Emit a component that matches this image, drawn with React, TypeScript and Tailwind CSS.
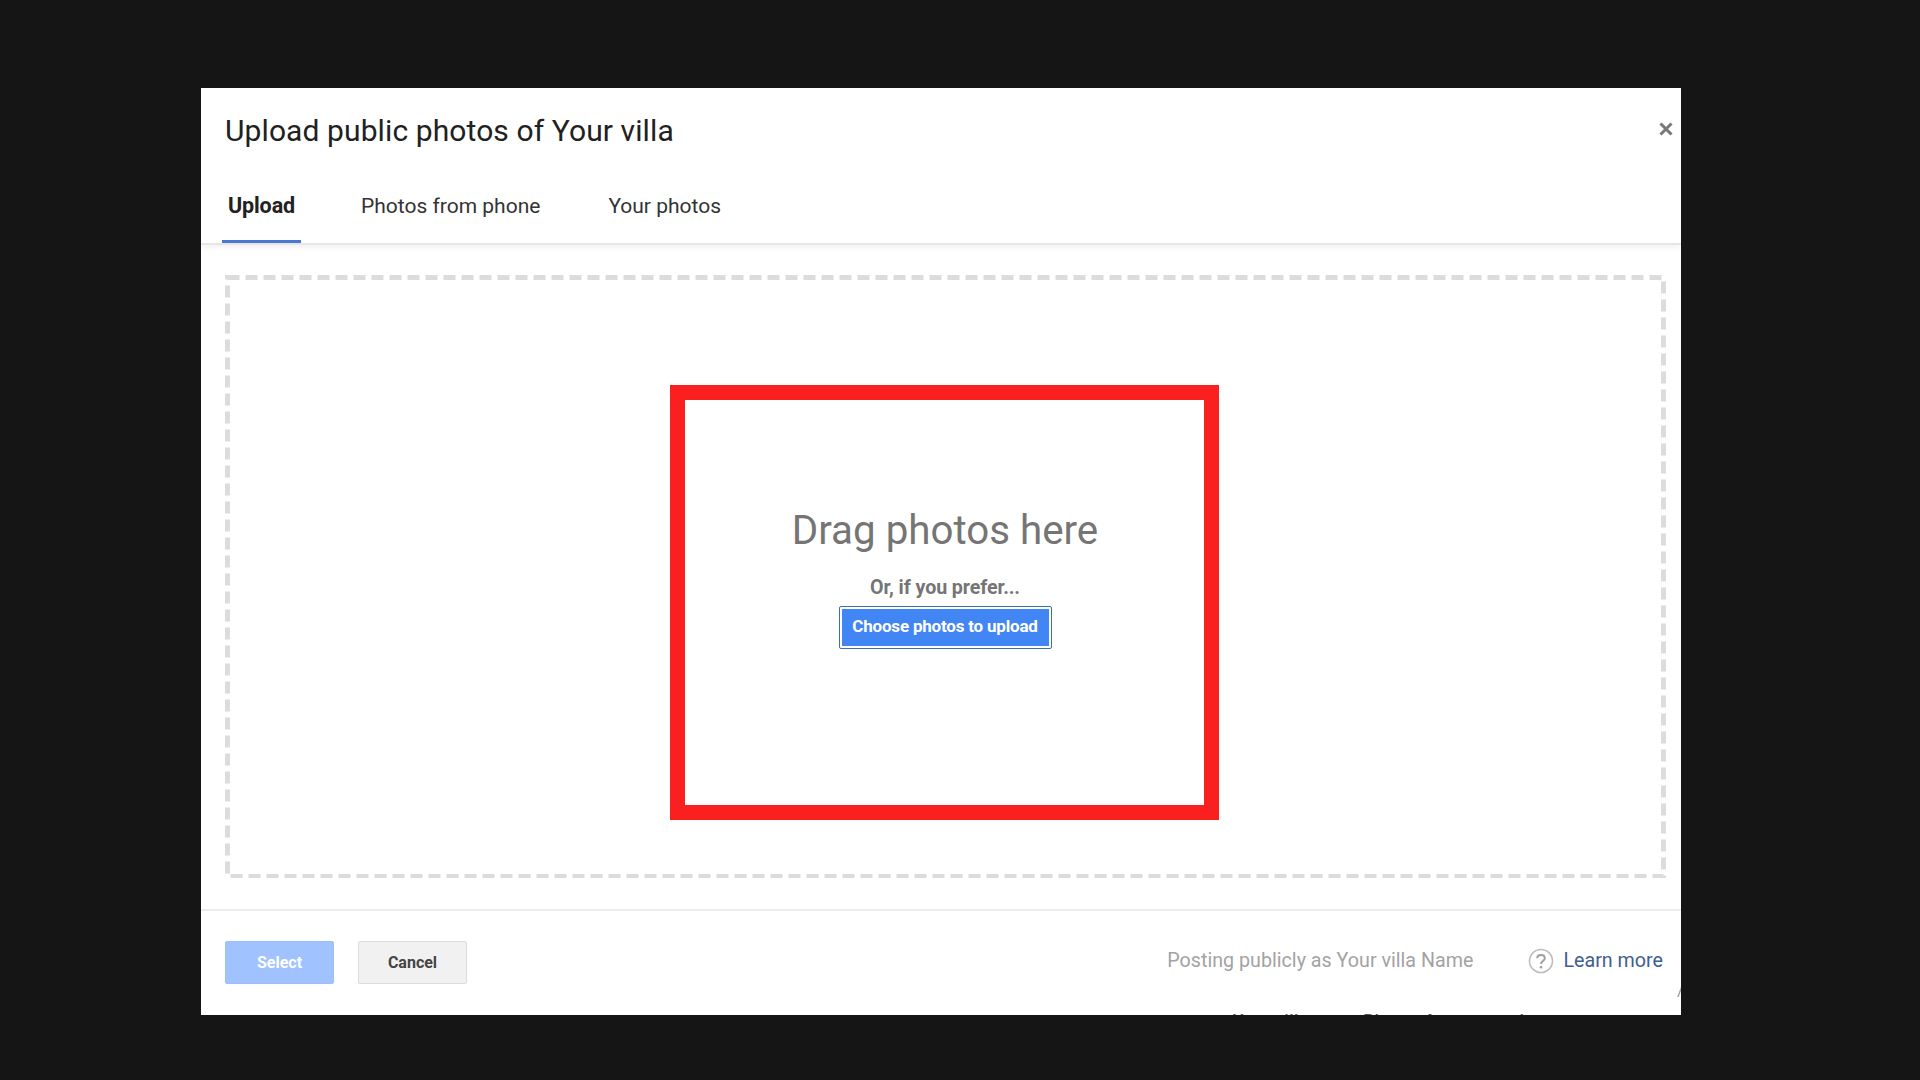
const tabs = ["Upload", "Photos from phone", "Your photos"];

export default function App() {
  return (
    <div className="w-[1920px] h-[1080px] overflow-hidden bg-[#151515] pl-[201px] pt-[88px] font-['Roboto',sans-serif]">
      <div className="relative w-[1480px] h-[927px] bg-white flex flex-col overflow-hidden">
        {/* Header */}
        <div className="relative z-10 h-[157px] shrink-0 border-b-2 border-[#e6e6e6] shadow-[0_3px_5px_rgba(0,0,0,0.05)] bg-white">
          <div className="flex items-start justify-between pl-[24px] pr-[8px] pt-[24px]">
            <h1 className="text-[30px] leading-[38px] text-[#212121] tracking-[0.1px]">
              Upload public photos of Your villa
            </h1>
            <button className="mt-[10px] text-[#777777]">
              <svg width="14" height="14" viewBox="0 0 14 14" className="block">
                <path d="M1.5 1.5 L12.5 12.5 M12.5 1.5 L1.5 12.5" stroke="currentColor" strokeWidth="3" fill="none" />
              </svg>
            </button>
          </div>
          <div className="absolute left-[21px] bottom-0 flex">
            <div className="w-[79px] h-[51px] flex justify-center border-b-[3px] border-[#4a78d0]">
              <span className="text-[21.5px] leading-[28px] font-bold text-[#212121] tracking-[-0.1px]">{tabs[0]}</span>
            </div>
            <span className="ml-[60px] text-[21px] leading-[28px] text-[#333333]">{tabs[1]}</span>
            <span className="ml-[68px] text-[21px] leading-[28px] text-[#333333]">{tabs[2]}</span>
          </div>
        </div>

        {/* Drop area */}
        <div className="flex-1 pt-[30px] pb-[31px] pl-[24px] pr-[15px]">
          <div className="relative w-full h-full flex justify-center pt-[110px] pr-[3px]">
            <svg className="absolute inset-0 w-full h-full">
              <rect x="2.5" y="2.5" width="1436" height="599" fill="none" stroke="#dcdcdc" strokeWidth="5" strokeDasharray="12 6" />
            </svg>
            <div className="relative w-[549px] h-[435px] border-[15px] border-[#fb2020] pl-[2px] flex flex-col items-center">
              <div className="mt-[103px] text-[40.3px] leading-[56px] text-[#757575]">Drag photos here</div>
              <div className="mt-[17px] text-[19.7px] leading-[24px] font-bold text-[#757575] tracking-[-0.1px]">Or, if you prefer...</div>
              <button className="mt-[6px] w-[213px] h-[43px] rounded-[2px] border border-[#3a6fb5] bg-white p-[2px]">
                <span className="flex items-center justify-center h-full bg-[#4285f4] text-white text-[17px] font-bold tracking-[-0.2px] pb-[2px]">
                  Choose photos to upload
                </span>
              </button>
            </div>
          </div>
        </div>

        {/* Footer */}
        <div className="h-[106px] shrink-0 border-t-2 border-[#ececec] flex items-start pl-[24px] pr-[18px] pt-[30px]">
          <button className="w-[109px] h-[43px] rounded-[2px] bg-[#a0c3ff] border border-[#9dbff5] text-white text-[16px] font-bold">
            Select
          </button>
          <button className="ml-[24px] w-[109px] h-[43px] rounded-[2px] bg-[#f1f1f1] border border-[#dcdcdc] text-[#444444] text-[16px] font-bold">
            Cancel
          </button>
          <div className="ml-auto flex items-center h-[40px] text-[19.7px]">
            <span className="text-[#a3a3a3]">Posting publicly as Your villa Name</span>
            <svg width="26" height="26" viewBox="0 0 26 26" className="ml-[55px] mr-[9px]">
              <circle cx="13" cy="13" r="11.5" fill="none" stroke="#bdbdbd" strokeWidth="1.6" />
              <path d="M9.2 10.2 C9.2 5.8 16.8 5.8 16.8 10.2 C16.8 13 13 13 13 16" fill="none" stroke="#9e9e9e" strokeWidth="2" />
              <circle cx="13" cy="19.2" r="1.3" fill="#9e9e9e" />
            </svg>
            <span className="text-[#3f5e92]">Learn more</span>
          </div>
        </div>

        {/* Page text cut off behind the dialog */}
        <span className="absolute left-[1032px] top-[922px] text-[17px] leading-[20px] font-medium text-[#555555] whitespace-nowrap tracking-[0.6px]">
          Your villa name Photos from your phone now
        </span>
        <span className="absolute right-[-3px] top-[892px] text-[17px] leading-[20px] text-[#999999]">/</span>
      </div>
    </div>
  );
}
